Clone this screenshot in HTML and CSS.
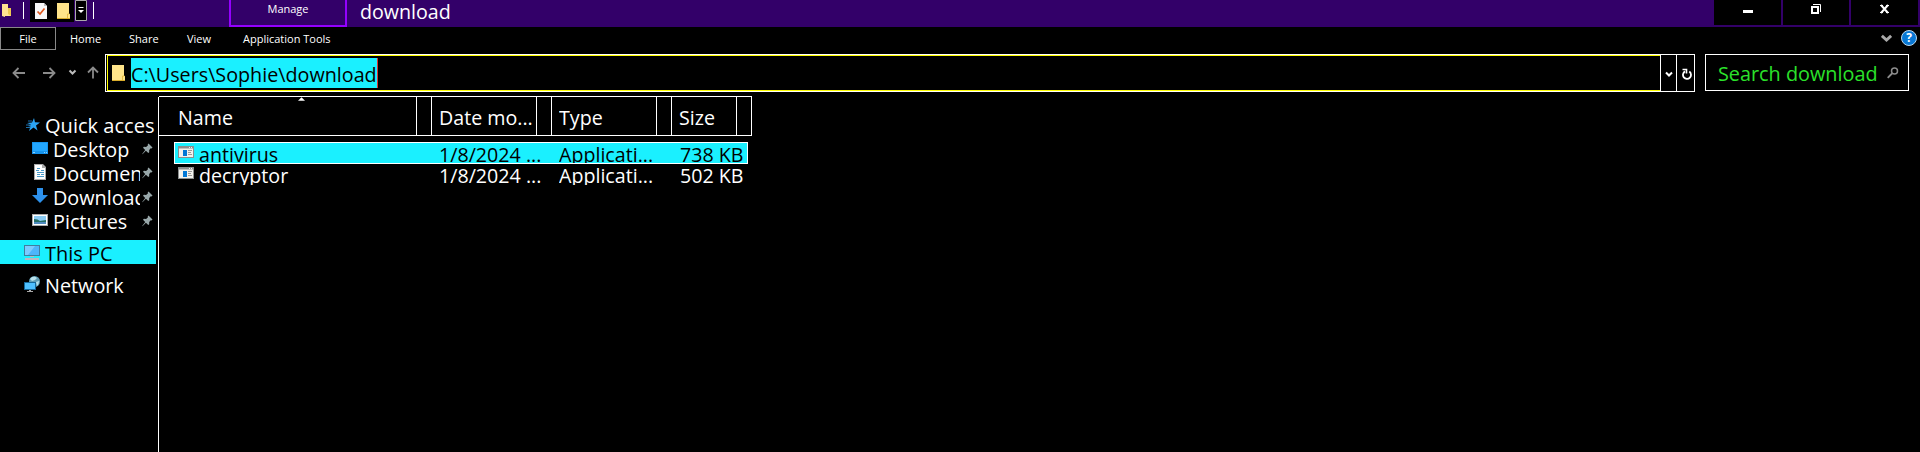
FILE: index.html
```html
<!DOCTYPE html>
<html lang="en">
<head>
<meta charset="utf-8">
<title>download</title>
<link rel="stylesheet" href="styles.css">
</head>
<body>
<svg class="defs" width="0" height="0">
  <symbol id="folder" viewBox="0 0 13 16"><path d="M0 0h12v11h1v5H0z" fill="#ffe48a"/><path d="M0 15h13v1H0z" fill="#d9ac2c"/><path d="M10.500 15V11h2" fill="none" stroke="#e5bd45"/></symbol>
  <symbol id="pin" viewBox="0 0 11 12"><path d="M6.5 0.5 10.5 4.500 9.500 5.500 8.700 5.300 7.200 7 7.200 9.200 6.300 10 3.900 7.700 0.500 11.300 0.200 11 3.200 7 1 4.700 1.900 3.800 4.100 3.900 6 2.300 5.700 1.400z" fill="#98a7a9"/></symbol>
  <symbol id="app" viewBox="0 0 16 12"><path d="M0 0h16v12H0z" fill="#8b8f8f"/><path d="M1 2.500h14V11H1z" fill="#f2f2ee"/><path d="M11 1h1v1h-1zM13 1h1v1h-1z" fill="#eee"/><path d="M5 4h4v6H5z" fill="#0078d7"/><path d="M10 4.500h4M10 6.500h3M10 8.500h4" stroke="#999"/></symbol>
</svg>
<header class="titlebar">
  <svg class="win-icon" viewBox="0 0 10 13"><path d="M0 0h6v4h3v8H3v1L0 12z" fill="#ffe391"/><path d="M6 4v6l3 2V4z" fill="#edc850"/></svg>
  <i class="rule"></i>
  <div class="quick">
    <svg class="props" viewBox="0 0 12 16"><path d="M0 0h9l3 3v13H0z" fill="#f7f7f7"/><path d="M9 0v3h3" fill="#bbb"/><path d="M2.500 8.500 5 11 9.500 5.500" fill="none" stroke="#e05a20" stroke-width="1.700"/></svg>
    <svg class="qfolder"><use href="#folder"/></svg>
  </div>
  <svg class="customize" viewBox="0 0 12 21"><path d="M.5.5h11v20H.5z" fill="#000" stroke="#aaa"/><path d="M3.500 7.500h5" stroke="#fff"/><path d="M3 10h6L6 13z" fill="#fff"/></svg>
  <i class="rule second"></i>
  <div class="manage"><span>Manage</span></div>
  <h1><span class="t">download</span></h1>
  <div class="controls">
    <div><svg viewBox="0 0 67 25"><path d="M29 10h10v3H29z" fill="#fff"/></svg></div>
    <div><svg viewBox="0 0 67 25"><path d="M29 7h6v6h-6z" fill="none" stroke="#fff" stroke-width="2"/><path d="M30 4.500h7.500V12" fill="none" stroke="#fff"/></svg></div>
    <div><svg viewBox="0 0 67 25"><path d="m30 5 7 8m0-8-7 8" stroke="#fff" stroke-width="2"/><path d="M29 5.500h3m3 0h3m-9 7h3m3 0h3" stroke="#fff" stroke-width="1"/></svg></div>
  </div>
</header>
<nav class="menu">
  <span class="file">File</span><span class="m home">Home</span><span class="m share">Share</span><span class="m view">View</span><span class="m tools">Application Tools</span>
  <svg class="expand" viewBox="0 0 10 8"><path d="m.8 1.500 4.200 4 4.200-4" fill="none" stroke="#a9a9a9" stroke-width="2.600"/></svg>
  <div class="help">?</div>
</nav>
<div class="locator">
  <svg class="arrows" viewBox="0 0 105 38" fill="none" stroke="#8a8a8a" stroke-width="1.800"><path d="M14 19h11M18.500 14 13.500 19l5 5M43 19h11M49.500 14l5 5-5 5M93 24.500V14M88 18.500l5-5 5 5"/><path d="m69.500 16.500 3 3 3-3" stroke="#bbb" stroke-width="2"/></svg>
  <div class="address">
    <div class="path"><svg class="pfolder"><use href="#folder"/></svg><span class="selected"><span class="t">C:\Users\Sophie\download</span></span></div>
    <div class="drop"><svg viewBox="0 0 8 7"><path d="m1 1.500 3 3 3-3" fill="none" stroke="#fff" stroke-width="2"/></svg></div>
    <div class="refresh"><svg viewBox="0 0 10 12"><path d="M7.300 3.600A4 4 0 1 1 3 3.400" fill="none" stroke="#fff" stroke-width="1.800"/><path d="M.5 1.500h4v4" fill="none" stroke="#fff" stroke-width="1.600"/></svg></div>
  </div>
  <div class="search"><span class="t">Search download</span><svg viewBox="0 0 12 12"><circle cx="7.500" cy="4" r="3" fill="none" stroke="#8c8c8c" stroke-width="1.500"/><path d="M5.500 6 .7 10.800" stroke="#8c8c8c" stroke-width="1.800"/></svg></div>
</div>
<main class="body">
  <aside>
    <div class="item top"><svg width="14" height="13" viewBox="0 0 14 13"><path d="M8 0 9 4.300 14 4.500 10 7.500 11.500 12.500 7.500 9.500 3 13 4.500 8.500 2 8 5 6.500 1 5 6 4.500z" fill="#2ba4f4"/><path d="M0 7h5M0 9.500h4M2 3h4" stroke="#1b6da9"/></svg><span class="name"><span class="t">Quick acces</span></span></div>
    <div class="item sub"><svg width="16" height="12" viewBox="0 0 16 12"><path d="M0 0h16v12H0z" fill="#1694ee"/><path d="M1 1h14v8H1z" fill="#23a7ff"/><path d="M1 10.500h2m9 0h1m1 0h1" stroke="#8bd0ff"/></svg><span class="name"><span class="t">Desktop</span></span><svg class="pin"><use href="#pin"/></svg></div>
    <div class="item sub tall"><svg width="16" height="16" viewBox="0 0 16 16"><path d="M2 0h9l3 3v13H2z" fill="#aaa"/><path d="M3 1h7v3h3v11H3z" fill="#fff"/><path d="M5 4.500h3M4 6.500h3m2 0h3M5 8.500h7M5 10.500h3m1 0h3M5 12.500h7" stroke="#4a9ac9"/></svg><span class="name"><span class="t">Documents</span></span><svg class="pin"><use href="#pin"/></svg></div>
    <div class="item sub tall"><svg width="16" height="15" viewBox="0 0 16 15"><path d="M5 0h6v7h5l-8 8-8-8h5z" fill="#2d91eb"/></svg><span class="name"><span class="t">Downloads</span></span><svg class="pin"><use href="#pin"/></svg></div>
    <div class="item sub"><svg width="16" height="12" viewBox="0 0 16 12"><path d="M0 0h16v12H0z" fill="#aaa"/><path d="M1 1h14v10H1z" fill="#fff"/><path d="M2 2h12v8H2z" fill="#8acbf4"/><path d="M2 5q4 0 6 2l6-1v3H2z" fill="#256f65"/><path d="M2 8h12v2H2z" fill="#4f8bc0"/></svg><span class="name"><span class="t">Pictures</span></span><svg class="pin"><use href="#pin"/></svg></div>
    <div class="item pc"><svg width="16" height="15" viewBox="0 0 16 15"><path d="M0 0h16v11H0z" fill="#3f7f9f"/><path d="M1 1h14v9H1z" fill="#4db5fb"/><path d="M1 1h10L4 10H1z" fill="#7bcbff"/><path d="M6 11h4v1H6zM1 13h14v2H1z" fill="#b8b8c0"/></svg><span class="name"><span class="t">This PC</span></span></div>
    <div class="item net tall"><svg width="16" height="16" viewBox="0 0 16 16"><circle cx="10.500" cy="5.500" r="5.500" fill="#5f9db5"/><path d="M8 1q3-1 5 1L11 4 8 5 6 3zM12 6l3-1q0 3-2 5z" fill="#b8e2ec"/><path d="M0 6h12v8H0z" fill="#14689b"/><path d="M1 7h10v6H1z" fill="#4fc0ff"/><path d="M5 14h2v1h2v1H3v-1h2z" fill="#aaa"/></svg><span class="name"><span class="t">Network</span></span></div>
  </aside>
  <section class="files">
    <div class="head">
      <svg class="sort" viewBox="0 0 8 4"><path d="M0 4 4 0l4 4z" fill="#fff"/></svg>
      <div class="c1"><span class="t">Name</span></div><i></i><div class="c2"><span class="t">Date mo...</span></div><i></i><div class="c3"><span class="t">Type</span></div><i></i><div class="c4"><span class="t">Size</span></div><i></i>
    </div>
    <div class="row sel"><svg><use href="#app"/></svg><span class="n"><span class="t">antivirus</span></span><span class="d"><span class="t">1/8/2024 ...</span></span><span class="a"><span class="t">Applicati...</span></span><span class="s"><span class="t">738 KB</span></span></div>
    <div class="row"><svg><use href="#app"/></svg><span class="n"><span class="t">decryptor</span></span><span class="d"><span class="t">1/8/2024 ...</span></span><span class="a"><span class="t">Applicati...</span></span><span class="s"><span class="t">502 KB</span></span></div>
  </section>
</main>
</body>
</html>
```
FILE: styles.css
```css
* { box-sizing: border-box; }
body { margin: 0; width: 1920px; height: 452px; overflow: hidden; background: #000; color: #fff; font-family: "Open Sans", "Noto Sans", sans-serif; font-size: 20.5px; line-height: 24px; display: flex; flex-direction: column; white-space: nowrap; }
svg { display: block; flex: none; }
.defs { position: absolute; }
.t { display: inline-block; transform: scaleX(.958); transform-origin: 0 50%; }
.titlebar { height: 27px; flex: none; display: flex; align-items: flex-start; background: #330069; }
.win-icon { width: 10px; height: 13px; margin: 4px 0 0 2px; }
.rule { width: 1px; height: 17px; margin: 2px 0 0 11px; background: #fff; }
.quick { width: 44px; height: 22px; margin-left: 6px; padding: 3px 0 0 5px; display: flex; gap: 10px; background: #000; }
.props { width: 12px; height: 16px; }
.qfolder { width: 13px; height: 16px; }
.customize { width: 12px; height: 21px; margin-left: 1px; }
.rule.second { margin-left: 6px; }
.manage { width: 118px; height: 27px; margin-left: 135px; border: 2px solid #9400ff; border-top: 0; text-align: center; font-size: 11px; line-height: 18px; }
h1 { margin: 0 0 0 13px; font-size: 20.5px; line-height: 23px; font-weight: 400; }
.controls { margin-left: auto; padding-right: 2px; display: flex; gap: 2px; }
.controls div { width: 67px; height: 25px; background: #000; overflow: hidden; }
.controls div:nth-child(2) { width: 66px; }
.controls svg { width: 67px; height: 25px; }
.menu { height: 23px; flex: none; display: flex; font-size: 11px; font-weight: 500; line-height: 23px; }
.file { width: 56px; border: 1px solid #888; line-height: 22px; text-align: center; }
.home { margin-left: 14px; width: 59px; }
.share { width: 58px; }
.view { width: 56px; }
.expand { width: 11px; height: 9px; margin: 7px 9px 0 auto; }
.help { width: 16px; height: 16px; margin: 3px 3px 0 0; border: 1px solid #b8d7ef; border-radius: 50%; background: #0878d5; font-size: 12px; font-weight: 700; line-height: 14px; text-align: center; }
.locator { display: flex; height: 38px; flex: none; margin-top: 4px; }
.arrows { width: 105px; height: 38px; }
.address { width: 1590px; display: flex; border: 1px solid #fff; }
.path { width: 1553px; flex: none; margin-left: 1px; display: flex; border: 1px solid #ff0; border-right: 0; }
.pfolder { width: 13px; height: 16px; margin: 9px 0 0 4px; }
.selected { width: 247px; height: 30px; margin: 2px 0 0 6px; background: #1af0ff; color: #000; border-right: 1px solid #d33; line-height: 32px; }
.selected .t { transform: scaleX(.962); }
.drop { width: 17px; flex: none; border: 1px solid #fff; border-width: 0 1px; padding: 16px 0 0 4px; }
.drop svg { width: 8px; height: 7px; }
.refresh { padding: 13px 0 0 5px; }
.refresh svg { width: 10px; height: 12px; }
.search { width: 204px; height: 37px; margin-left: 10px; padding-left: 12px; display: flex; border: 1px solid #fff; color: #2be22b; line-height: 37px; }
.search .t { transform: scaleX(.967); }
.search svg { width: 12px; height: 12px; margin: 12px 9px 0 auto; }
.body { flex: 1; display: flex; min-height: 0; margin-top: 4px; }
aside { width: 158px; flex: none; padding-top: 16px; }
.item { height: 24px; width: 156px; display: flex; align-items: flex-start; line-height: 26px; }
.item > svg:first-child { margin-top: 6px; }
.item.tall > svg:first-child { margin-top: 4px; }
.item.pc > svg:first-child { margin-top: 5px; }
.item .name { flex: 1; height: 26px; overflow: hidden; }
.item .t { transform: scaleX(.965); }
.top { padding-left: 26px; }
.item.top .name { margin-left: 5px; overflow: visible; }
.item.top .t { transform: scaleX(.978); }
.sub { padding-left: 32px; }
.item.sub .name { margin: 0 0 0 5px; flex: 0 0 87px; }
.item .pin { width: 11px; height: 12px; margin: 7px 0 0 2px; }
.pc { margin-top: 8px; padding-left: 24px; background: #1af0ff; color: #000; }
.item.pc .t { transform: scaleX(.972); }
.net { margin-top: 8px; padding-left: 24px; }
.pc .name, .net .name { margin-left: 5px; }
.files { flex: 1; border-left: 1px solid #fff; margin-top: 1px; }
.head { position: relative; width: 593px; height: 40px; margin: -1px 0 0 0; border: 1px solid #fff; border-left: 0; display: flex; line-height: 41px; }
.head i { width: 16px; flex: none; border: 1px solid #fff; border-width: 0 1px; }
.head i:last-child { width: 15px; border-right: 0; }
.head div { overflow: hidden; flex: none; }
.sort { position: absolute; left: 139px; top: 0; width: 7px; height: 4px; }
.c1 { width: 257px; padding-left: 19px; }
.c2 { width: 104px; padding-left: 7px; }
.c3 { width: 104px; padding-left: 7px; }
.c4 { width: 64px; padding-left: 7px; }
.row { width: 574px; height: 22px; margin-left: 15px; display: flex; overflow: hidden; padding-left: 4px; line-height: 25px; }
.row.sel { margin-top: 6px; border: 1px solid #fff; padding-left: 3px; background: #1af0ff; color: #000; line-height: 23px; }
.row:last-child { height: 21px; line-height: 23px; }
.row svg { width: 16px; height: 12px; margin-top: 3px; }
.row span { flex: none; }
.row .n { width: 240px; margin-left: 5px; }
.row .d { width: 120px; }
.row .a { width: 121px; }
```
